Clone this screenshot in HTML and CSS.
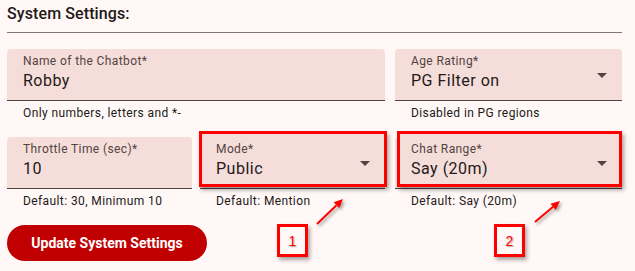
FILE: index.html
```html
<!DOCTYPE html>
<html lang="en">
	<head>
		<meta charset="UTF-8" />
		<meta name="viewport" content="width=device-width, initial-scale=1.0" />
		<title>System Settings</title>
		<link rel="stylesheet" href="styles.css">
	</head>
	<body>
		<div class="page">
			<h2 class="title">System Settings:</h2>
			<hr class="divider" />

			<div class="row">
				<div class="cell">
					<div class="field">
						<div class="field-body">
							<span class="label">Name of the Chatbot*</span>
							<span class="value">Robby</span>
						</div>
					</div>
					<p class="helper">Only numbers, letters and *-</p>
				</div>
				<div class="cell">
					<div class="field">
						<div class="field-body">
							<span class="label">Age Rating*</span>
							<span class="value">PG Filter on</span>
						</div>
						<span class="caret"></span>
					</div>
					<p class="helper">Disabled in PG regions</p>
				</div>
			</div>

			<div class="row">
				<div class="pair">
					<div class="cell">
						<div class="field">
							<div class="field-body">
								<span class="label">Throttle Time (sec)*</span>
								<span class="value">10</span>
							</div>
						</div>
						<p class="helper">Default: 30, Minimum 10</p>
					</div>
					<div class="cell">
						<div class="field">
							<div class="field-body">
								<span class="label">Mode*</span>
								<span class="value">Public</span>
							</div>
							<span class="caret"></span>
							<span class="frame frame-mode"></span>
						</div>
						<p class="helper">Default: Mention</p>
					</div>
				</div>
				<div class="cell">
					<div class="field">
						<div class="field-body">
							<span class="label">Chat Range*</span>
							<span class="value">Say (20m)</span>
						</div>
						<span class="caret"></span>
						<span class="frame frame-range"></span>
					</div>
					<p class="helper">Default: Say (20m)</p>
				</div>
			</div>

			<div class="actions">
				<button class="btn-primary">Update System Settings</button>
			</div>

			<!-- annotation overlays -->
			<span class="badge badge-one">1</span>
			<span class="badge badge-two">2</span>
			<svg class="arrows" width="635" height="271" viewBox="0 0 635 271">
				<line x1="317" y1="224" x2="336.5" y2="205.2" />
				<polygon points="343,199 339.3,208.1 333.7,202.3" />
				<line x1="535" y1="222" x2="553.1" y2="206.8" />
				<polygon points="560,201 555.7,209.9 550.5,203.7" />
			</svg>
		</div>
	</body>
</html>
```

FILE: styles.css
```css
:root {
	--background: #fff8f6;
	--field: #f5ddda;
	--text: #231918;
	--text-muted: #534341;
	--outline: #857371;
	--primary: #c00000;
	--mark: #ff0000;
}

* {
	margin: 0;
	padding: 0;
	box-sizing: border-box;
}

body {
	font-family: Roboto, "Noto Sans", sans-serif;
	background-color: var(--background);
	color: var(--text);
}

.page {
	position: relative;
	width: 635px;
	height: 271px;
	padding: 2px 13px 0 7px;
	overflow: hidden;
}

.title {
	font-size: 16px;
	font-weight: 500;
	line-height: 24px;
	letter-spacing: 0.1px;
	color: var(--text);
}

.divider {
	border: none;
	border-top: 1px solid var(--outline);
	margin: 6px 0 16px;
}

.row {
	display: grid;
	grid-template-columns: 378px 1fr;
	column-gap: 10px;
	margin-bottom: 16px;
}

.pair {
	display: grid;
	grid-template-columns: 185px 185px;
	column-gap: 8px;
}

.field {
	position: relative;
	display: flex;
	align-items: center;
	height: 52px;
	padding: 4px 0 0 16px;
	background: var(--field);
	border-bottom: 1px solid var(--text-muted);
	border-radius: 4px 4px 0 0;
}

.field-body {
	flex: 1;
	display: flex;
	flex-direction: column;
	align-self: flex-start;
}

.label {
	font-size: 12px;
	line-height: 16px;
	letter-spacing: 0.4px;
	color: var(--text-muted);
}

.value {
	font-size: 16px;
	line-height: 24px;
	letter-spacing: 0.5px;
	color: var(--text);
}

.caret {
	width: 0;
	height: 0;
	margin: 0 15px 2px 0;
	border-left: 5px solid transparent;
	border-right: 5px solid transparent;
	border-top: 5px solid var(--text-muted);
}

.helper {
	font-size: 12px;
	line-height: 16px;
	letter-spacing: 0.4px;
	padding: 4px 0 0 16px;
	color: var(--text);
}

.actions {
	display: flex;
}

.btn-primary {
	width: 200px;
	height: 36px;
	border: none;
	border-radius: 18px;
	background: var(--primary);
	color: #fff;
	font-family: Roboto, sans-serif;
	font-size: 14px;
	font-weight: 700;
	cursor: pointer;
}

/* red annotation boxes drawn over the screenshot */
.frame {
	position: absolute;
	top: -6px;
	bottom: 1px;
	border: 3px solid var(--mark);
	box-shadow: 2px 3px 4px rgba(0, 0, 0, 0.35), inset 0 6px 0 var(--field);
	pointer-events: none;
}

.frame-mode {
	left: -1px;
	right: -2px;
}

.frame-range {
	left: 2px;
	right: 0;
}

.badge {
	position: absolute;
	top: 224px;
	width: 31px;
	height: 33px;
	display: flex;
	align-items: center;
	justify-content: center;
	border: 3px solid var(--mark);
	box-shadow: 2px 3px 4px rgba(0, 0, 0, 0.35);
	color: var(--mark);
	font-family: "Liberation Sans", Arial, sans-serif;
	font-size: 14px;
	text-shadow: 1px 1px 1px rgba(0, 0, 0, 0.3);
}

.badge-one {
	left: 277px;
}

.badge-two {
	left: 494px;
}

.arrows {
	position: absolute;
	left: 0;
	top: 0;
	pointer-events: none;
	filter: drop-shadow(2px 2px 1.5px rgba(0, 0, 0, 0.35));
}

.arrows line {
	stroke: var(--mark);
	stroke-width: 2;
}

.arrows polygon {
	fill: var(--mark);
}
```
